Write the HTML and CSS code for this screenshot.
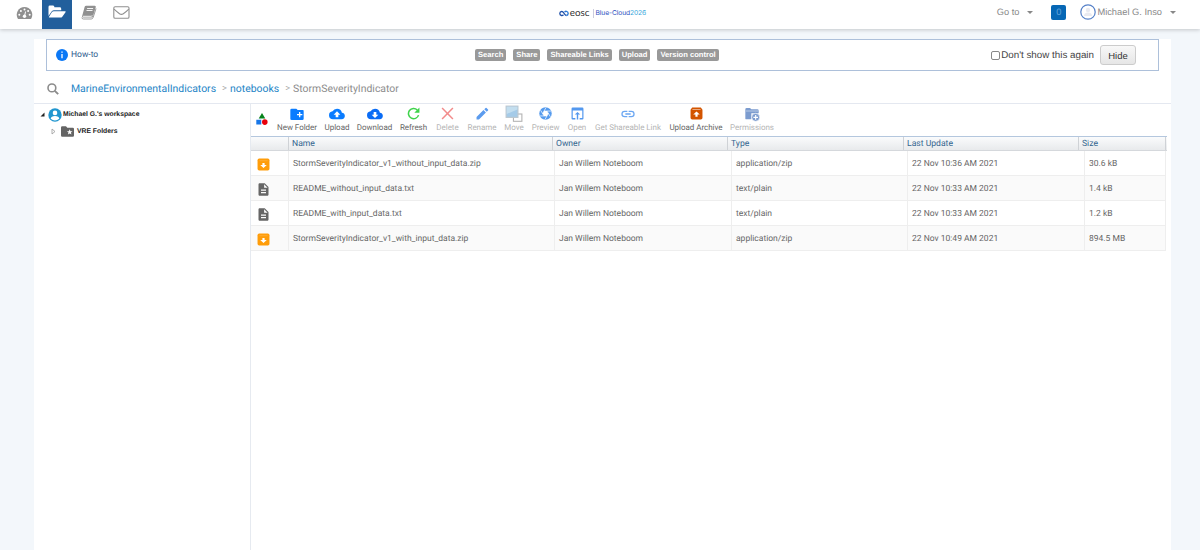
FILE: index.html
```html
<!DOCTYPE html>
<html lang="en">

<head>
    <meta charset="UTF-8">
    <meta name="viewport" content="width=device-width, initial-scale=1.0">
    <title>Workspace</title>
    <link rel="stylesheet" href="styles.css">
</head>

<body>
    <!-- shared icon shapes -->
    <svg width="0" height="0" class="defs">
        <symbol id="zip" viewBox="0 0 24 24">
            <rect x="1" y="1" width="22" height="22" rx="3"/>
            <path d="M4.500 5h15" stroke="#fff" stroke-opacity=".3" stroke-width="1"/>
            <path d="M12 18.500l6-5.500h-4V9h-4v4H6z" fill="#fff"/>
        </symbol>
        <symbol id="doc" viewBox="0 0 24 24">
            <path d="M14 2H6c-1.100 0-2 .9-2 2v16c0 1.100.9 2 2 2h12c1.100 0 2-.9 2-2V8l-6-6zm2 16H8v-2h8v2zm0-4H8v-2h8v2zm-3-5V3.500L18.500 9H13z"/>
        </symbol>
    </svg>

    <header class="topbar">
        <nav class="apps">
            <a class="app">
                <svg width="17" height="14" viewBox="0 0 17 14"><path d="M8.500 1A7.800 7.800 0 0 0 2 13h13A7.800 7.800 0 0 0 8.500 1z" fill="#909090"/><g fill="#fff"><circle cx="3.300" cy="8.800" r="1"/><circle cx="4.900" cy="5" r="1"/><circle cx="8.500" cy="3.400" r="1"/><circle cx="12.100" cy="5" r="1"/><circle cx="13.700" cy="8.800" r="1"/></g><path d="M9.600 5.500L8.800 9" stroke="#fff" stroke-width="1"/><circle cx="8.500" cy="10.200" r="1.700" fill="#fff"/></svg>
            </a>
            <a class="app active">
                <svg width="18" height="14" viewBox="0 0 18 14" fill="#fff"><path d="M.5 11V2q0-1.400 1.400-1.400h3.200q1.300 0 1.300 1.700h5.400q1.400 0 1.400 1.400v1.500H6q-1.300 0-2.200 1z"/><path d="M5.800 6.200h11.400q.8.200.3 1l-3.200 4.500q-.7.900-1.800.9H1.300q-.8-.2-.3-.9l3-4.600q.7-.9 1.800-.9z"/></svg>
            </a>
            <a class="app">
                <svg width="16" height="15" viewBox="0 0 16 15"><path d="M5.200.7h8.500q1.500.1 1.100 1.400l-2.900 9.300q-.4 1.200-1.500 1.200H2.300q-1.500-.1-1.200-1.400L3.600 2q.3-1.200 1.600-1.300z" fill="#909090"/><path d="M6.100 3.500h6M5.500 5.500h6M2 11.300h8.100q.8 0 1.100-.8" stroke="#fff" fill="none" stroke-width=".9"/><path d="M15 3.500l-2.800 8.800q-.5 1.700-2 1.700H2.400Q1 14 .9 12.500" stroke="#909090" fill="none" stroke-width=".9"/></svg>
            </a>
            <a class="app">
                <svg width="17" height="13" viewBox="0 0 17 13" fill="none" stroke="#909090" stroke-width="1.100"><rect x=".8" y=".8" width="15.200" height="11.400" rx="1.300"/><path d="M1 3.200q2 1.900 5.500 4.500 1.900 1.400 3.800 0Q14 5.200 15.800 3.200"/></svg>
            </a>
        </nav>
        <div class="brand">
            <svg width="10" height="7" viewBox="0 0 10 7" fill="none" stroke-width="1.300"><path d="M4.500 4.700Q3.500 5.800 2.500 5.500.7 5.200.8 3.300 1 1.400 2.700 1.300 3.900 1.300 5 3.300T7.300 5.500" stroke="#1d4fa8"/><path d="M5.500 2.100Q6.500 1 7.500 1.300 9.200 1.600 9.200 3.400 9.100 5.300 7.300 5.500" stroke="#2b78d5"/></svg>
            <span class="eosc">eosc</span>
            <span class="cloud">Blue-Cloud<i>2026</i></span>
        </div>
        <div class="account">
            <span class="goto">Go to</span><b class="caret"></b>
            <span class="count">0</span>
            <svg class="avatar" width="16" height="16" viewBox="0 0 16 16"><circle cx="8" cy="8" r="7.200" fill="#fff" stroke="#5580c8" stroke-width="1.200"/><circle cx="8" cy="6" r="2.200" fill="#e9eaf0"/><path d="M4 12q0-3.500 4-3.500t4 3.500z" fill="#e9eaf0"/></svg>
            <span class="user">Michael G. Inso</span><b class="caret"></b>
        </div>
    </header>

    <main class="page">
        <div class="howto">
            <svg width="12" height="12" viewBox="0 0 12 12"><circle cx="6" cy="6" r="6" fill="#0b78f5"/><path d="M6 2.500v1.300M6 5v4.300" stroke="#fff" stroke-width="1.300"/></svg>
            <span class="howto-title">How-to</span>
            <div class="tags">
                <span>Search</span><span>Share</span><span>Shareable Links</span><span>Upload</span><span>Version control</span>
            </div>
            <label class="again"><input type="checkbox">Don't show this again</label>
            <button class="hide">Hide</button>
        </div>

        <div class="crumbs">
            <svg width="12" height="12" viewBox="0 0 12 12" fill="none" stroke="#8c8c8c"><circle cx="4.900" cy="4.900" r="3.900" stroke-width="1.600"/><path d="M7.800 7.800l3.400 3.400" stroke-width="1.900"/></svg>
            <a class="crumb-root">MarineEnvironmentalIndicators</a>
            <span class="sep">&gt;</span>
            <a>notebooks</a>
            <span class="sep">&gt;</span>
            <span class="current">StormSeverityIndicator</span>
        </div>

        <div class="workspace">
            <aside class="tree">
                <div class="node">
                    <svg width="5" height="5" viewBox="0 0 5 5"><path d="M4.500.5v4h-4z" fill="#222"/></svg>
                    <svg width="14" height="14" viewBox="0 0 14 14"><circle cx="7" cy="7" r="6.700" fill="#2196cf"/><circle cx="7" cy="4.900" r="2.300" fill="#fff"/><path d="M2.700 10.700q.4-2.600 4.300-2.600t4.300 2.600q-4.300 3.400-8.600 0z" fill="#fff"/></svg>
                    <span>Michael G.'s workspace</span>
                </div>
                <div class="node child">
                    <svg width="5" height="7" viewBox="0 0 5 7"><path d="M1 1l3 2.500-3 2.500z" fill="#fff" stroke="#999" stroke-width=".8"/></svg>
                    <svg width="13" height="11" viewBox="0 0 13 11"><path d="M0 9.500v-8Q0 .3 1.200.3H5l1.300 1.400h5.500Q13 1.700 13 3v6.500q0 1.200-1.200 1.200H1.200Q0 10.700 0 9.500z" fill="#646464"/><path d="M8.700 3.300l.8 1.900 2 .1-1.600 1.300.6 2-1.800-1.100-1.800 1.100.6-2-1.600-1.300 2-.1z" fill="#fff"/></svg>
                    <span>VRE Folders</span>
                </div>
            </aside>

            <section class="files">
                <div class="toolbar">
                    <svg class="shapes" width="12" height="12" viewBox="0 0 12 12"><path d="M6 0l3.300 5.500H2.700z" fill="#07821b"/><path d="M.3 6.800h5v4.800h-5z" fill="#1777e8"/><circle cx="8.800" cy="9.100" r="2.800" fill="#e8000b"/></svg>
                    <div class="tool w-new">
                        <svg viewBox="0 0 24 24" fill="#0a7cff"><path d="M21 6h-8l-2-2H4Q2 4 2 6v13q0 2 2 2h16q2 0 2-2V8q0-2-1-2zM20 14h-3v3h-2v-3h-3v-2h3V9h2v3h3z"/></svg>
                        <span>New Folder</span>
                    </div>
                    <div class="tool w-up">
                        <svg viewBox="0 0 24 24" fill="#0a7cff"><path d="M19.350 10.040A7.490 7.490 0 0 0 12 4 7.500 7.500 0 0 0 5.350 8.040 6 6 0 0 0 6 20h13a5 5 0 0 0 .35-9.960zM14 13v4h-4v-4H7l5-5 5 5z"/></svg>
                        <span>Upload</span>
                    </div>
                    <div class="tool w-down">
                        <svg viewBox="0 0 24 24" fill="#0a6cf5"><path d="M19.350 10.040A7.490 7.490 0 0 0 12 4 7.500 7.500 0 0 0 5.350 8.040 6 6 0 0 0 6 20h13a5 5 0 0 0 .35-9.960zM17 13l-5 5-5-5h3V9h4v4z"/></svg>
                        <span>Download</span>
                    </div>
                    <div class="tool w-refresh">
                        <svg viewBox="0 0 24 24" fill="none" stroke="#3ed34a" stroke-width="2.800"><path d="M19 5.500A9.500 9.500 0 1 0 21.300 15"/><path d="M23 1v9.500h-9.500z" fill="#3ed34a" stroke="none"/></svg>
                        <span>Refresh</span>
                    </div>
                    <div class="tool off w-delete">
                        <svg viewBox="0 0 24 24" stroke="#f28b8b" stroke-width="2.800"><path d="M2 2l20 20M22 2L2 22"/></svg>
                        <span>Delete</span>
                    </div>
                    <div class="tool off w-rename">
                        <svg viewBox="0 0 24 24" fill="#5b9bee"><path d="M1 18.500V23h4.500L18.300 10.200l-4.500-4.500zM22.200 6.300q.9-.9 0-1.800l-2.700-2.700q-.9-.9-1.800 0l-2.400 2.400 4.500 4.500z"/></svg>
                        <span>Rename</span>
                    </div>
                    <div class="tool off w-move">
                        <svg class="big" viewBox="0 0 16 16"><rect x="7.500" y="8" width="7.500" height="6.500" fill="#fff" stroke="#b5b5b5"/><rect x="1" y="1" width="10.500" height="10" fill="#a5cbe8" stroke="#bcc7cf"/><path d="M1.500 1.500h9.500v2.500l-9.500 4z" fill="#c3deef"/></svg>
                        <span>Move</span>
                    </div>
                    <div class="tool off w-preview">
                        <svg viewBox="0 0 24 24" fill="#559bee"><circle cx="12" cy="12" r="11.500"/><path d="M9.300 7.500h5.400l2.600 4.500-2.600 4.500H9.300L6.700 12z" fill="#fff"/><path d="M9.300 7.500H22M14.700 7.500L21 18M17.300 12L11 23M14.700 16.500H2M9.300 16.500L3 6M6.700 12L13 1" stroke="#fff" stroke-width="1.300"/></svg>
                        <span>Preview</span>
                    </div>
                    <div class="tool off w-open">
                        <svg viewBox="0 0 24 24" fill="#5398ef"><path d="M21 1H3Q1 1 1 3v18q0 2 2 2h5v-2.500H3.200V6.500h17.600v14H16V23h5q2 0 2-2V3q0-2-2-2zM12 9l-5 5h3.700v9h2.600v-9H17z"/></svg>
                        <span>Open</span>
                    </div>
                    <div class="tool off w-link">
                        <svg viewBox="0 0 24 24" fill="#6ba7f2"><path d="M3.900 12A3.100 3.100 0 0 1 7 8.900h4V7H7a5 5 0 0 0 0 10h4v-1.900H7A3.100 3.100 0 0 1 3.900 12zM8 13h8v-2H8zm9-6h-4v1.900h4a3.100 3.100 0 0 1 0 6.200h-4V17h4a5 5 0 0 0 0-10z"/></svg>
                        <span>Get Shareable Link</span>
                    </div>
                    <div class="tool w-archive">
                        <svg viewBox="0 0 24 24"><path d="M4 1h16l3 4v15q0 3-3 3H4q-3 0-3-3V5z" fill="#d35400"/><path d="M4.500 4h15v1h-15zM12 8.500l6 5.500h-4v4h-4v-4H6z" fill="#fff"/></svg>
                        <span>Upload Archive</span>
                    </div>
                    <div class="tool off w-perm">
                        <svg viewBox="0 0 24 24" fill="#7c9ccf"><path d="M2 19V5q0-2 2-2h5l2 2h9q2 0 2 2v4H11v9H4q-2 0-2-1z"/><path d="M3 7.500h18" stroke="#fff" stroke-width=".7"/><circle cx="17.500" cy="17" r="6" stroke="#fff"/><path d="M14 17h7M17.500 13.500v7" stroke="#fff" stroke-width="1.700"/></svg>
                        <span>Permissions</span>
                    </div>
                </div>

                <div class="thead">
                    <span></span><span>Name</span><span>Owner</span><span>Type</span><span>Last Update</span><span>Size</span><span></span>
                </div>
                <div class="row">
                    <span><svg class="zip"><use href="#zip"/></svg></span><span>StormSeverityIndicator_v1_without_input_data.zip</span><span>Jan Willem Noteboom</span><span>application/zip</span><span>22 Nov 10:36 AM 2021</span><span>30.6 kB</span>
                </div>
                <div class="row">
                    <span><svg class="doc"><use href="#doc"/></svg></span><span>README_without_input_data.txt</span><span>Jan Willem Noteboom</span><span>text/plain</span><span>22 Nov 10:33 AM 2021</span><span>1.4 kB</span>
                </div>
                <div class="row">
                    <span><svg class="doc"><use href="#doc"/></svg></span><span>README_with_input_data.txt</span><span>Jan Willem Noteboom</span><span>text/plain</span><span>22 Nov 10:33 AM 2021</span><span>1.2 kB</span>
                </div>
                <div class="row">
                    <span><svg class="zip"><use href="#zip"/></svg></span><span>StormSeverityIndicator_v1_with_input_data.zip</span><span>Jan Willem Noteboom</span><span>application/zip</span><span>22 Nov 10:49 AM 2021</span><span>894.5 MB</span>
                </div>
            </section>
        </div>
    </main>
</body>

</html>
```
FILE: styles.css
```css
* {
    box-sizing: border-box;
}

body {
    margin: 0;
    height: 550px;
    display: flex;
    flex-direction: column;
    background: #f3f7fb;
    font-family: Roboto, sans-serif;
    text-rendering: geometricPrecision;
    color: #666;
    overflow: hidden;
}

svg {
    display: block;
    flex: none;
}

.defs {
    position: absolute;
}

/* top bar */
.topbar {
    flex: none;
    height: 29px;
    display: grid;
    grid-template-columns: 1fr auto 1fr;
    background: #fff;
    box-shadow: 0 1px 4px rgba(0, 0, 0, 0.2);
    font-family: "Liberation Sans", Arial, sans-serif;
}

.apps {
    display: flex;
    padding-left: 8px;
}

.app {
    width: 32px;
    height: 29px;
    display: flex;
    justify-content: center;
    padding-top: 6px;
}

.app:nth-child(3) {
    padding-top: 5px;
}

.app.active {
    width: 30px;
    margin: 0 1px 0 2px;
    padding-top: 5px;
    background: #225f9c;
}

.brand {
    display: flex;
    align-items: center;
    height: 27px;
    padding-left: 5px;
    font-family: Inter, sans-serif;
}

.eosc {
    margin-left: 1px;
    padding-bottom: 1px;
    font-family: Lato, sans-serif;
    font-size: 9.800px;
    line-height: 9px;
    color: #333;
}

.cloud {
    margin-left: 3px;
    padding-left: 2px;
    border-left: 1px solid #ccd;
    font-size: 6.700px;
    line-height: 9px;
    letter-spacing: -0.1px;
    color: #2c4fc0;
}

.cloud i {
    font-style: normal;
    color: #38a9dc;
}

.account {
    display: flex;
    align-items: center;
    justify-content: flex-end;
    height: 24px;
    padding-right: 24px;
    font-size: 9.300px;
    color: #888;
}

.caret {
    border: 3px solid transparent;
    border-top-color: #888;
    border-bottom: 0;
    margin-left: 8px;
}

.count {
    width: 15px;
    height: 15px;
    margin: 0 14px 0 18px;
    border-radius: 2px;
    background: #0667b5;
    color: #62a5dd;
    line-height: 15px;
    text-align: center;
}

.user {
    margin-left: 1px;
}

/* page */
.page {
    flex: 1;
    display: flex;
    flex-direction: column;
    margin: 10px 29px 0 34px;
    background: #fff;
}

.howto {
    flex: none;
    height: 32px;
    margin: 0 12px;
    padding: 0 22px 0 9px;
    display: flex;
    align-items: center;
    border: 1px solid #adc0da;
}

.howto-title {
    width: 404px;
    margin-left: 3px;
    font-size: 8.500px;
    color: #2c5a8c;
}

.tags {
    display: flex;
    gap: 7px;
}

.tags span {
    padding: 0 3px;
    border-radius: 2px;
    background: #999;
    color: #fff;
    font: bold 7.600px/12px "Liberation Sans", Arial, sans-serif;
}

.again {
    display: flex;
    align-items: center;
    margin-left: auto;
    font: 9.800px "Liberation Sans", Arial, sans-serif;
    color: #444;
}

.again input {
    appearance: none;
    width: 9px;
    height: 9px;
    margin: 1px 1px 0 0;
    border: 1px solid #888;
    border-radius: 2px;
    background: #fff;
}

.hide {
    width: 36px;
    height: 20px;
    margin-left: 6px;
    padding: 0;
    border: 1px solid #ccc;
    border-radius: 3px;
    background: linear-gradient(#f8f8f8, #e6e6e6);
    font: 9.500px "Liberation Sans", Arial, sans-serif;
    color: #333;
}

.crumbs {
    flex: none;
    height: 33px;
    display: flex;
    align-items: center;
    padding: 3px 0 0 13px;
    font-size: 10.450px;
    border-bottom: 1px solid #e4e8f0;
}

.crumbs a {
    color: #2484c6;
}

.crumbs .crumb-root {
    margin-left: 12px;
}

.sep {
    margin: 0 3px 0 6px;
    font-size: 9.500px;
    color: #999;
}

.current {
    color: #8c8c8c;
}

.workspace {
    flex: 1;
    display: flex;
}

/* tree */
.tree {
    width: 216px;
    padding: 2px 0 0 6px;
    font: bold 6.800px "Liberation Sans", Arial, sans-serif;
    color: #222;
}

.node {
    display: flex;
    align-items: center;
    gap: 1px;
    height: 17px;
}

.node svg + svg {
    margin-left: 2px;
}

.node.child {
    padding-left: 11px;
    gap: 3px;
}

/* file list */
.files {
    width: 917px;
    border-left: 1px solid #e6eaf0;
}

.toolbar {
    height: 32px;
    display: flex;
    padding: 0 0 0 5px;
    font-size: 8px;
    letter-spacing: -0.03px;
    color: #666;
}

.shapes {
    margin: 9px 9px 0 0;
}

.tool {
    display: flex;
    flex-direction: column;
    align-items: center;
    margin-right: 8px;
    white-space: nowrap;
}

.tool svg {
    width: 16px;
    height: 16px;
    margin: 2px 0 1px;
}

.tool span {
    line-height: 10px;
}

.tool.off {
    color: #b5b5b5;
}

.tool .big {
    width: 18px;
    height: 18px;
    margin: 1px 0 0;
}

.w-new { width: 40px; }
.w-up { width: 24px; }
.w-down { width: 35px; }
.w-refresh { width: 27px; }
.w-delete { width: 25px; }
.w-rename { width: 28px; }
.w-move { width: 20px; }
.w-preview { width: 27px; }
.w-open { width: 20px; }
.w-link { width: 66px; }
.w-archive { width: 54px; }
.w-perm { width: 42px; }

.w-refresh svg,
.w-delete svg,
.w-rename svg,
.w-preview svg,
.w-open svg,
.w-archive svg {
    width: 13px;
    height: 13px;
    margin: 3px 0;
}

.thead {
    height: 15px;
    display: grid;
    grid-template-columns: 38px 264px 175px 176px 175px 87px 1fr;
    background: linear-gradient(#fafbfc, #e8eaec);
    border-top: 1px solid #b4c7de;
    border-bottom: 1px solid #d5d8dc;
    font-size: 8.600px;
    line-height: 15px;
    color: #33658f;
}

.thead span {
    height: 13px;
    padding-left: 3px;
    border-right: 1px solid #cfd2d6;
}

.thead span:last-child {
    border: 0;
}

.row {
    width: 915px;
    height: 25px;
    display: grid;
    grid-template-columns: 38px 266px 177px 176px 177px 81px;
    border-bottom: 1px solid #eee;
    font-size: 8.500px;
    line-height: 26px;
}

.row:nth-child(odd) {
    background: #fff;
}

.row:nth-child(even) {
    background: #fafafa;
}

/* header and toolbar come first, so the odd data rows stay white */
.row span {
    height: 24px;
    padding-left: 4px;
    border-right: 1px solid #eee;
}

.row span:first-child {
    padding-left: 6px;
}

.zip {
    width: 13px;
    height: 13px;
    margin-top: 7px;
    fill: #ff9d0a;
}

.doc {
    width: 15px;
    height: 15px;
    margin: 6px 0 0 -1px;
    fill: #666;
}
```
